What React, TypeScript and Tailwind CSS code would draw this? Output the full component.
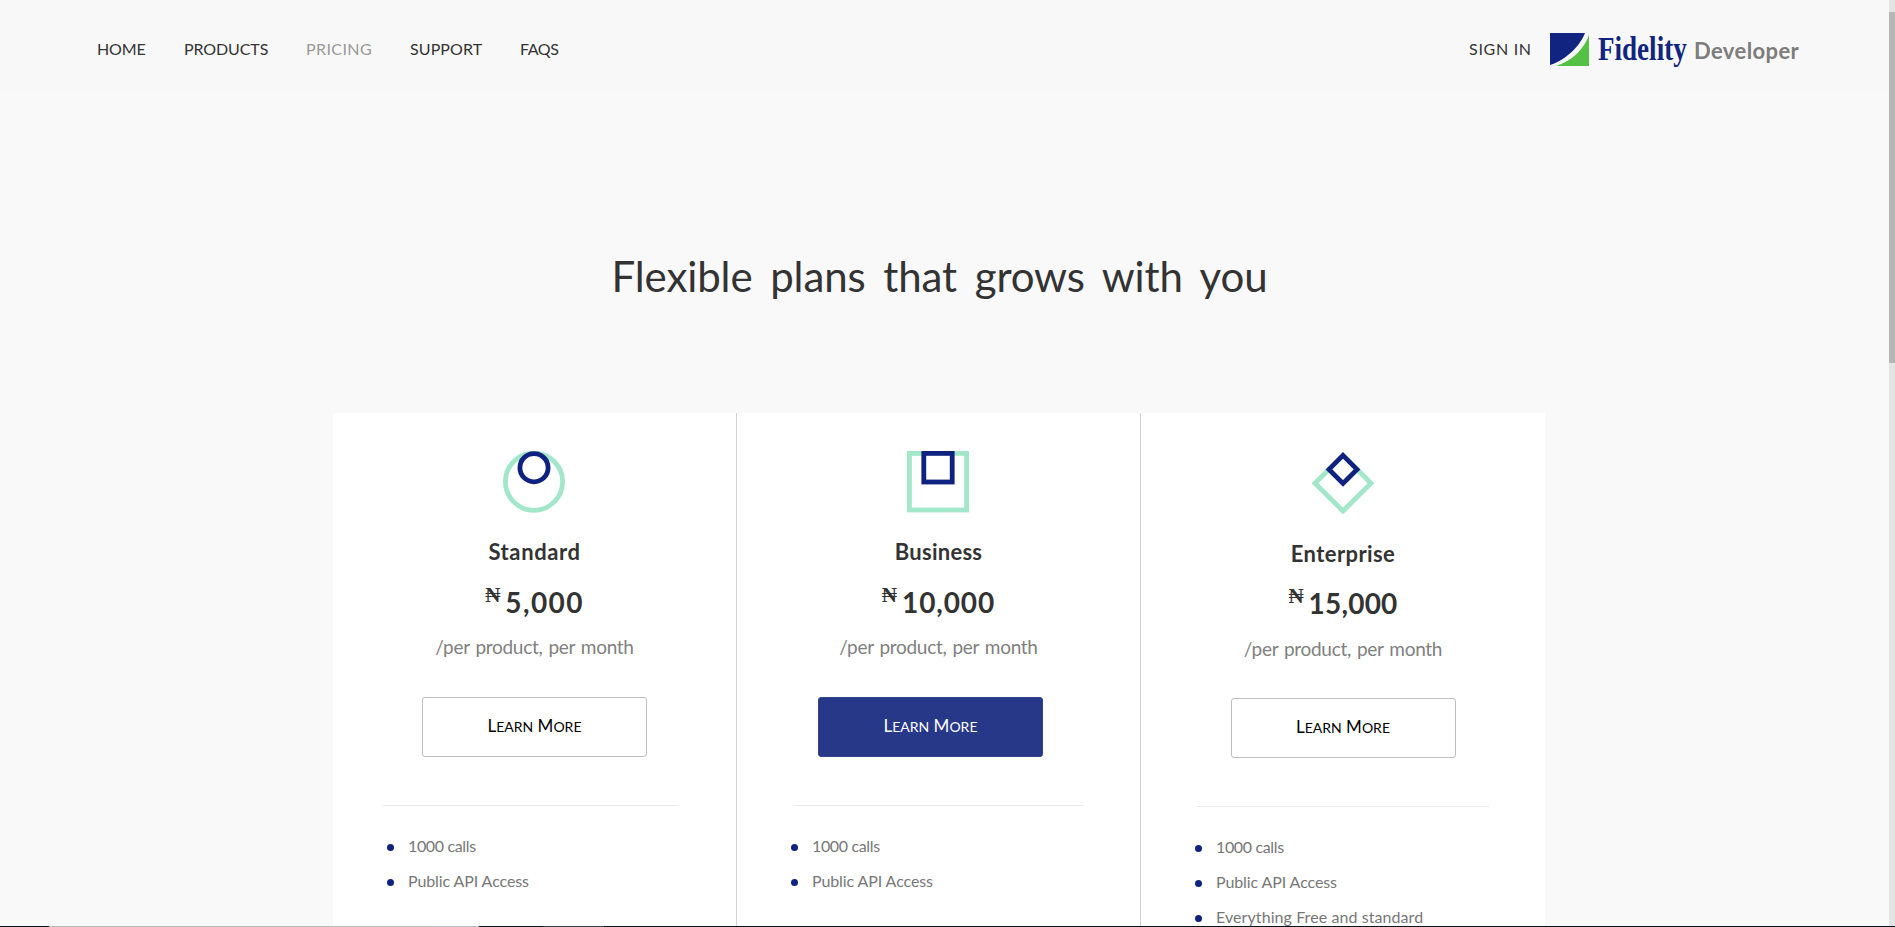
import type { ReactNode } from "react";

const RING = "#a3e7cb";
const NAVY = "#0f2280";

type Plan = {
  name: string;
  nameClass: string;
  price: string;
  priceClass: string;
  icon: ReactNode;
  topClass: string;
  priceGap: string;
  unitGap: string;
  buttonClass: string;
  ruleClass: string;
  features: { text: string; tracking: string }[];
  cardClass: string;
};

const calls = { text: "1000 calls", tracking: "tracking-[-0.35px]" };
const access = { text: "Public API Access", tracking: "tracking-[-0.1px]" };

const plans: Plan[] = [
  {
    name: "Standard",
    nameClass: "tracking-[0.6px]",
    price: "5,000",
    priceClass: "tracking-[1.4px]",
    icon: (
      <svg width="62" height="62" viewBox="0 0 62 62" fill="none" className="mr-px block">
        <circle cx="31" cy="30.7" r="28.6" stroke={RING} strokeWidth="4.8" />
        <circle cx="31" cy="16.7" r="14.1" fill="#fff" stroke={NAVY} strokeWidth="4.8" />
      </svg>
    ),
    topClass: "pt-[38px]",
    priceGap: "mt-[15px]",
    unitGap: "mt-[12px]",
    buttonClass: "mt-[37px] border-[#bdbdbd] bg-white text-black",
    ruleClass: "ml-[50px] w-[296px]",
    features: [calls, access],
    cardClass: "w-[404px] border-r border-[#d3d3d3]",
  },
  {
    name: "Business",
    nameClass: "tracking-[0.25px]",
    price: "10,000",
    priceClass: "tracking-[0.9px]",
    icon: (
      <svg width="62" height="62" viewBox="0 0 62 62" fill="none" className="mr-px block">
        <rect x="2.4" y="2.4" width="57.2" height="56.6" stroke={RING} strokeWidth="4.8" />
        <rect x="16.8" y="2.4" width="28.4" height="28.6" fill="#fff" stroke={NAVY} strokeWidth="4.8" />
      </svg>
    ),
    topClass: "pt-[38px]",
    priceGap: "mt-[15px]",
    unitGap: "mt-[12px]",
    buttonClass: "mt-[37px] mr-4 border-[#33448f] bg-[#273889] text-white",
    ruleClass: "ml-[56px] w-[291px]",
    features: [calls, access],
    cardClass: "w-[404px] border-r border-[#d3d3d3]",
  },
  {
    name: "Enterprise",
    nameClass: "tracking-[0.4px]",
    price: "15,000",
    priceClass: "tracking-[0.2px]",
    icon: (
      <svg width="64" height="64" viewBox="0 0 64 64" fill="none" className="-mt-[2px] block">
        <path d="M32 4.4 60 32.2 32 60 4 32.2Z" stroke={RING} strokeWidth="4.8" />
        <path d="M32 4.4 46 18.4 32 32.4 18 18.4Z" fill="#fff" stroke={NAVY} strokeWidth="4.8" />
      </svg>
    ),
    topClass: "pt-[40px]",
    priceGap: "mt-[14px]",
    unitGap: "mt-[13px]",
    buttonClass: "mt-[36px] border-[#bdbdbd] bg-white text-black",
    ruleClass: "ml-[56px] w-[292px]",
    features: [calls, access, { text: "Everything Free and standard", tracking: "tracking-[0.08px]" }],
    cardClass: "w-[404px]",
  },
];

const links = [
  { text: "HOME", className: "w-[87px] tracking-[-0.1px] text-[#333]" },
  { text: "PRODUCTS", className: "w-[122px] tracking-[-0.1px] text-[#333]" },
  { text: "PRICING", className: "w-[104px] tracking-[0.4px] text-[#999]" },
  { text: "SUPPORT", className: "w-[110px] tracking-[0.1px] text-[#333]" },
  { text: "FAQS", className: "tracking-[-0.4px] text-[#333]" },
];

function Header() {
  return (
    <header className="flex h-[92px] shrink-0 justify-between bg-[#f8f8f8] pr-[89px] pl-[97px] text-base">
      <nav className="flex h-[98px] items-center">
        {links.map((l) => (
          <a key={l.text} className={l.className}>{l.text}</a>
        ))}
      </nav>
      <div className="flex h-[98px] items-center">
        <a className="w-[81px] tracking-[0.7px] text-[#333]">SIGN IN</a>
        <svg width="39" height="33" viewBox="0 0 39 33" className="block">
          <path d="M0 0H35C30 13 16 27 0 32Z" fill="#102480" />
          <path d="M39 2V33H6C22 28 34 16 39 2Z" fill="#53c143" />
        </svg>
        <span className="ml-[9px] w-[96px] origin-left scale-x-[0.82] font-['Liberation_Serif',serif] text-[33px] leading-none font-bold text-[#102480]">
          Fidelity
        </span>
        <span className="w-[106px] pt-[3px] text-[22px] leading-none font-bold tracking-[0.4px] text-[#7d7d7d]">
          Developer
        </span>
      </div>
    </header>
  );
}

function PlanCard({ plan }: { plan: Plan }) {
  return (
    <section className={`flex flex-col items-center bg-white ${plan.topClass} ${plan.cardClass}`}>
      {plan.icon}
      <h2 className={`mt-[24px] text-[22px] leading-[30px] font-bold text-[#333] ${plan.nameClass}`}>{plan.name}</h2>
      <div className={`flex h-10 items-start gap-[5px] text-[#333] ${plan.priceGap}`}>
        <span className="font-['Liberation_Serif',serif] text-[21px] leading-[26px] font-bold">₦</span>
        <span className={`text-[28px] leading-[40px] font-bold ${plan.priceClass}`}>{plan.price}</span>
      </div>
      <p className={`text-[19px] leading-[26px] tracking-[-0.3px] text-[#808080] [word-spacing:1.5px] ${plan.unitGap}`}>
        /per product, per month
      </p>
      <button className={`h-[60px] w-[225px] rounded-[3px] border pb-[4px] text-[17px] leading-none ${plan.buttonClass}`}>
        L<span className="text-[14px]">EARN</span> M<span className="text-[14px]">ORE</span>
      </button>
      <hr className={`mt-12 self-start border-[#ebebeb] ${plan.ruleClass}`} />
      <ul className="mt-[22px] self-start pl-[54px] text-base leading-[35px] text-[#777]">
        {plan.features.map((f) => (
          <li key={f.text} className="flex items-center gap-[14px]">
            <span className="mt-[3px] size-[7px] rounded-full bg-[#0f2280]" />
            <span className={f.tracking}>{f.text}</span>
          </li>
        ))}
      </ul>
    </section>
  );
}

export default function App() {
  return (
    <div className="flex h-[927px] w-[1895px] flex-col overflow-hidden bg-[#f9f9f9] font-[Lato,sans-serif]">
      <div className="flex h-[926px] overflow-hidden">
        <main className="flex w-[1889px] shrink-0 flex-col">
          <Header />
          <h1 className="mt-[156px] w-[1879px] text-center text-[42px] leading-[56px] tracking-[-0.1px] text-[#333] [word-spacing:7px]">
            Flexible plans that grows with you
          </h1>
          <div className="mt-[109px] ml-[333px] flex h-[540px] w-[1212px] shrink-0">
            {plans.map((p) => (
              <PlanCard key={p.name} plan={p} />
            ))}
          </div>
        </main>
        <aside className="w-[6px] shrink-0 bg-[#e4e4e4] pt-3">
          <div className="h-[351px] bg-[#b6b6b6]" />
        </aside>
      </div>
      <footer className="flex h-px bg-[#03141f]">
        <div className="ml-[49px] w-[381px] bg-[#b9b9b9]" />
        <div className="w-[49px] bg-[#b5bdc2]" />
        <div className="ml-[64px] w-[61px] bg-[#34434d]" />
      </footer>
    </div>
  );
}
